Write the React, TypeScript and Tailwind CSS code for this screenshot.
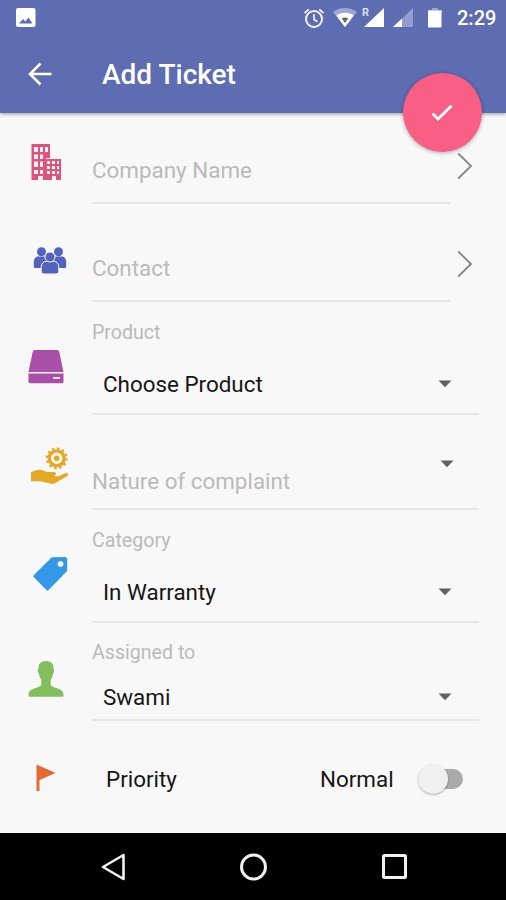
import type { ReactNode } from "react";

function BuildingIcon() {
  return (
    <svg width="36" height="42" viewBox="0 0 36 42" fill="none">
      <g fill="#e4517a">
        <path
          fillRule="evenodd"
          d="M2.500 2H21v14h-4v22h-3v-4H9v4H2.500zM5 5v5h4V5zM11 5v5h3V5zM16 5v5h3V5zM5 12.500V17h4v-4.500zM11 12.500V17h3v-4.500zM5 19.500V25h4v-5.500zM11 19.500V25h3v-5.500zM5 28v4h4v-4zM11 28v4h3v-4z"
        />
        <path
          fillRule="evenodd"
          d="M16 17h16v21h-5v-4h-4v4h-7zM18 19v3h3v-3zM23 19v3h3v-3zM28 19v3h2v-3zM18 24v3h3v-3zM23 24v3h3v-3zM28 24v3h2v-3zM18 29v3h3v-3zM23 29v3h3v-3zM28 29v3h2v-3z"
        />
      </g>
    </svg>
  );
}

function PeopleIcon() {
  return (
    <svg width="34" height="28" viewBox="0 0 34 28" fill="#5363bd">
      <circle cx="8.500" cy="4.800" r="4.500" />
      <circle cx="25.500" cy="4.800" r="4.500" />
      <path d="M.8 20v-5c0-3.500 2-5.500 4.500-5.500h6.500L15 12l-5 9H3c-1.400 0-2.200-.3-2.200-1zM33.200 20v-5c0-3.500-2-5.500-4.500-5.500h-6.500L19 12l5 9h7c1.400 0 2.200-.3 2.200-1z" />
      <path
        stroke="#f8f8f8"
        d="M8.200 24.200V20.500c0-3.800 2-6 5-6.300h7.600c3 .3 5 2.500 5 6.300v3.700c0 1.800-1.500 2.800-3.500 2.800H11.700c-2 0-3.500-1-3.500-2.800z"
      />
      <circle cx="17" cy="10" r="5" stroke="#f8f8f8" strokeWidth=".9" />
    </svg>
  );
}

function DriveIcon() {
  return (
    <svg width="36" height="34" viewBox="0 0 36 34" fill="#a94fa8">
      <path d="M7 0h22c1.200 0 2 .8 2.300 2L35.500 22H.5L4.700 2C5 .8 5.800 0 7 0z" />
      <path
        fillRule="evenodd"
        d="M.5 23.500h35v8c0 1-.8 1.800-1.800 1.800H2.300c-1 0-1.800-.8-1.800-1.800zM25 27v1.800h7V27z"
      />
    </svg>
  );
}

function ServiceIcon() {
  return (
    <svg width="38" height="38" viewBox="0 0 38 38">
      <circle cx="25.700" cy="11.300" r="9.900" fill="none" stroke="#e5a823" strokeWidth="2" strokeDasharray="2.600 2.584" />
      <circle cx="25.700" cy="11.300" r="7.400" fill="none" stroke="#e5a823" strokeWidth="3.400" />
      <circle cx="25.700" cy="11.300" r="2.800" fill="#e5a823" />
      <path
        fill="#e5a823"
        d="M0 25.500c4.500-2.400 8.500-3.500 12-2.100l4 1.600h6.500c3.200 0 3.400 3.200.4 4l3.600.4 7.500-3c2.800-.8 4.300 1 2.300 2.500L24 36.200c-1.500.8-3 .8-4.500.4L9 34.300H0z"
      />
    </svg>
  );
}

function TagIcon() {
  return (
    <svg width="36" height="36" viewBox="0 0 36 36">
      <path
        fill="#3498e8"
        fillRule="evenodd"
        d="M18.800 1.200 32.500 1l1.800 1.500-.2 12.500L15.300 34.300c-.6.500-1.100.5-1.700 0L.7 21c-.5-.6-.5-1.100 0-1.700zM27.500 5a3 3 0 1 0 .01 0z"
      />
    </svg>
  );
}

function PersonIcon() {
  return (
    <svg width="36" height="36" viewBox="0 0 36 36" fill="#82be5c">
      <path d="M18 0c4.800 0 7.700 2.800 7.500 7.500.9.400 1 3.800-.4 4.700-.4 3-1.200 4.800-2.400 6.500v4.500c0 1.800 1.500 2.300 4.800 3.500 4.800 1.600 8 3 8 7v1.200c0 .5-.3.800-.8.800H1.300c-.5 0-.8-.3-.8-.8v-1.200c0-4 3.200-5.400 8-7 3.300-1.200 4.800-1.700 4.800-3.500v-4.500c-1.200-1.700-2-3.500-2.400-6.500-1.400-.9-1.300-4.300-.4-4.700C10.300 2.800 13.200 0 18 0z" />
    </svg>
  );
}

function FlagIcon() {
  return (
    <svg width="20" height="28" viewBox="0 0 20 28" fill="#e56a31">
      <path d="M.5.500 19.500 9 3.500 16v11h-3z" />
    </svg>
  );
}

function Chevron() {
  return (
    <svg width="16" height="28" viewBox="0 0 16 28" fill="none" stroke="#858585" strokeWidth="1.800">
      <path d="M1.200 1.500 14 14 1.200 26.500" />
    </svg>
  );
}

function Caret() {
  return (
    <svg width="14" height="8" viewBox="0 0 14 8" fill="#606060">
      <path d="M.5.500h13L7 7.300z" />
    </svg>
  );
}

function StatusBar() {
  return (
    <div className="flex h-9 items-start pl-4 pt-2">
      <svg width="20" height="20" viewBox="0 0 20 20">
        <path
          fill="#fff"
          fillRule="evenodd"
          d="M2 0h15.500a2 2 0 0 1 2 2v15a2 2 0 0 1-2 2H2a2 2 0 0 1-2-2V2a2 2 0 0 1 2-2zM3 15.500h13.500l-4-6-3.200 4-2.300-2.500z"
        />
      </svg>
      <svg className="ml-[267px]" width="22" height="21" viewBox="0 0 22 21" fill="none" stroke="#f4f5ff" strokeWidth="2">
        <circle cx="11" cy="11" r="8" />
        <path d="M11 6v5.500l3.500 2.300M1.500 5l4.300-3.700M20.500 5l-4.300-3.700" strokeWidth="1.700" />
      </svg>
      <svg className="ml-[8px]" width="24" height="20" viewBox="0 0 24 20">
        <path fill="#9da7d6" d="M0 4C7-1.300 17-1.300 24 4L12 19z" />
        <path fill="#fff" d="M3.300 7.600c5-3.700 12.400-3.700 17.400 0L12 19z" />
        <path fill="#666" d="M8.800 10.500q3.200-2 6.400 0L12 15z" />
      </svg>
      <div className="flex w-[27px]">
        <span className="ml-[5px] w-[7px] text-[11px] font-bold leading-[9px] text-[#d7dcf5]">R</span>
        <svg className="-ml-[7px] shrink-0" width="22" height="20" viewBox="0 0 22 20">
          <path fill="#fff" d="M22 0v19H2z" />
        </svg>
      </div>
      <svg className="ml-[8px]" width="22" height="20" viewBox="0 0 22 20">
        <path fill="#929cce" d="M21 0v19H1z" />
        <path fill="#fff" d="M10 10.500V19H1z" />
      </svg>
      <svg className="ml-[14px]" width="14" height="20" viewBox="0 0 14 20">
        <path fill="#9da7d6" d="M4 0h6v2h4v3H0V2h4z" />
        <rect y="2.500" width="13.500" height="17" rx="1" fill="#fff" />
      </svg>
      <span className="ml-[15px] text-[20px] font-medium leading-5 text-white">2:29</span>
    </div>
  );
}

function AppBar() {
  return (
    <header className="relative h-[113px] bg-[#5e6cb1] shadow-[0_1px_4px_rgba(0,0,0,0.4)]">
      <StatusBar />
      <div className="flex h-[77px] items-center pl-7">
        <svg width="24" height="24" viewBox="0 0 24 24" fill="none" stroke="#fff" strokeWidth="2.600">
          <path d="M23.500 11H2M12.500.500 2 11l10.500 10.500" />
        </svg>
        <h1 className="ml-[50px] text-[28px] font-medium leading-8 text-white">Add Ticket</h1>
      </div>
      <button
        type="button"
        className="absolute left-[402.500px] top-[73px] flex h-[79px] w-[79px] items-center justify-center rounded-full bg-[#f95e85] shadow-[0_1px_4px_rgba(0,0,0,0.3)]"
      >
        <svg width="22" height="18" viewBox="0 0 22 18" fill="none" stroke="#fff" strokeWidth="2.800">
          <path d="m1.500 9.500 5.500 5.500L20.500 1.800" />
        </svg>
      </button>
    </header>
  );
}

type RowProps = {
  icon: ReactNode;
  iconClass: string;
  rowClass: string;
  children: ReactNode;
};

function Row({ icon, iconClass, rowClass, children }: RowProps) {
  return (
    <div className={`flex ${rowClass}`}>
      <div className={`w-[92px] shrink-0 ${iconClass}`}>{icon}</div>
      {children}
    </div>
  );
}

function LinkField({ label, className }: { label: string; className: string }) {
  return (
    <>
      <div className={`w-[358px] border-b-2 border-[#e6e6e6] text-[22.4px] leading-7 text-[#bababa] ${className}`}>
        {label}
      </div>
      <div className={`pl-[7px] ${className}`}>
        <div className="-mt-[4px]">
          <Chevron />
        </div>
      </div>
    </>
  );
}

type SelectFieldProps = { label: string; value: string; labelClass: string; valueClass: string };

function SelectField({ label, value, labelClass, valueClass }: SelectFieldProps) {
  return (
    <div className="w-[387px] border-b-2 border-[#e6e6e6]">
      <div className={`text-[19.6px] leading-6 text-[#bababa] ${labelClass}`}>{label}</div>
      <div className={`flex items-center justify-between pl-[11px] pr-[27px] text-[22.4px] leading-7 text-[#161616] ${valueClass}`}>
        {value}
        <Caret />
      </div>
    </div>
  );
}

function NavBar() {
  return (
    <nav className="flex h-[67px] items-center bg-black pl-[101px]">
      <svg width="26" height="28" viewBox="0 0 26 28" fill="none" stroke="#f2f2f2" strokeWidth="2.600" strokeLinejoin="round">
        <path d="M22.500 2v24L2 14z" />
      </svg>
      <svg className="ml-[113px]" width="28" height="28" viewBox="0 0 28 28" fill="none" stroke="#f2f2f2" strokeWidth="3">
        <circle cx="13.500" cy="14" r="12" />
      </svg>
      <svg className="ml-[114px]" width="25" height="25" viewBox="0 0 25 25" fill="none" stroke="#f2f2f2" strokeWidth="3">
        <rect x="1.500" y="1.500" width="22" height="22" rx="1" />
      </svg>
    </nav>
  );
}

export default function App() {
  return (
    <div className="h-[900px] w-[506px] overflow-hidden bg-[#f8f8f8] font-[Roboto,sans-serif]">
      <AppBar />

      <main className="h-[720px]">
        <Row icon={<BuildingIcon />} iconClass="pl-[29px] pt-[29px]" rowClass="h-[91px]">
          <LinkField label="Company Name" className="pt-[43px]" />
        </Row>
        <Row icon={<PeopleIcon />} iconClass="pl-[33px] pt-[43px]" rowClass="h-[98px]">
          <LinkField label="Contact" className="pt-[50px]" />
        </Row>
        <Row icon={<DriveIcon />} iconClass="pl-[28px] pt-[48px]" rowClass="h-[113px]">
          <SelectField label="Product" value="Choose Product" labelClass="pt-[19px]" valueClass="pt-[25px]" />
        </Row>
        <Row icon={<ServiceIcon />} iconClass="pl-[31px] pt-[32px]" rowClass="h-[95px]">
          <div className="flex w-[387px] justify-between border-b-2 border-[#e6e6e6] pr-[25px] pt-[45px]">
            <div className="pt-[7px] text-[22.4px] leading-7 text-[#bababa]">Nature of complaint</div>
            <Caret />
          </div>
        </Row>
        <Row icon={<TagIcon />} iconClass="pl-[33px] pt-[46px]" rowClass="h-[113px]">
          <SelectField label="Category" value="In Warranty" labelClass="pt-[19px]" valueClass="pt-[25px]" />
        </Row>
        <Row icon={<PersonIcon />} iconClass="pl-[28px] pt-[38px]" rowClass="h-[98px]">
          <SelectField label="Assigned to" value="Swami" labelClass="pt-[18px]" valueClass="pt-[18px]" />
        </Row>
        <Row icon={<FlagIcon />} iconClass="pl-[36px] pt-[43px]" rowClass="h-[112px]">
          <div className="flex w-[371px] items-center pl-[14px] pt-[3px] text-[22.4px] leading-7 text-[#161616]">
            <span className="w-[214px]">Priority</span>
            <span>Normal</span>
            <div className="ml-auto flex h-[20px] w-[44px] items-center rounded-full bg-[#aaaaaa]">
              <div className="-ml-[1px] h-[30px] w-[30px] shrink-0 rounded-full bg-[#f0f0f0] shadow-[0_1px_2px_rgba(0,0,0,0.3)]" />
            </div>
          </div>
        </Row>
      </main>

      <NavBar />
    </div>
  );
}
